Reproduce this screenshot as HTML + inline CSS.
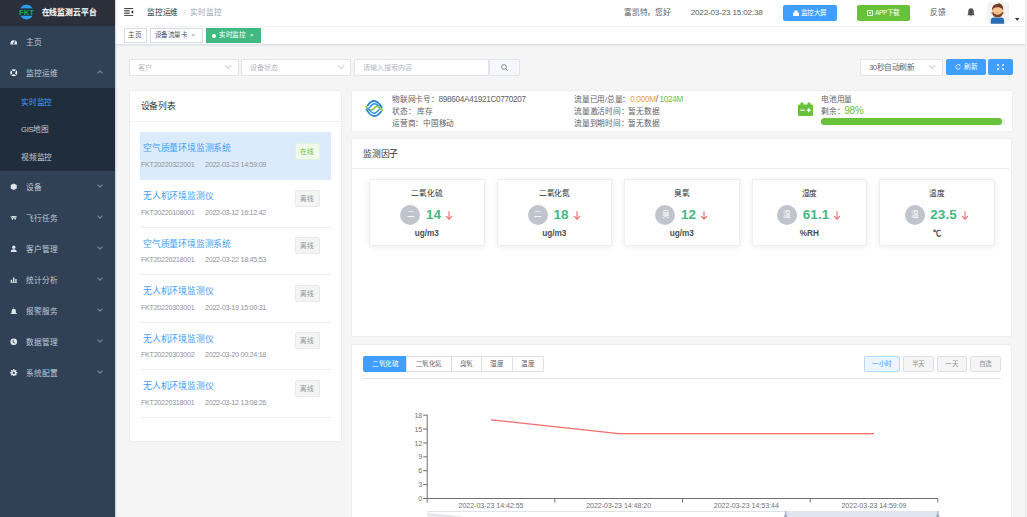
<!DOCTYPE html>
<html lang="zh-CN"><head><meta charset="utf-8">
<style>
*{box-sizing:border-box;margin:0;padding:0}
html,body{width:1027px;height:517px;overflow:hidden}
body{font-family:"Liberation Sans",sans-serif;background:#f5f5f6;position:relative;color:#606266}
.abs{position:absolute}
#side{left:0;top:0;width:115px;height:517px;background:#304156;box-shadow:1px 0 1.5px rgba(0,21,41,.2);z-index:5}
#logo{left:0;top:0;width:115px;height:26px;background:#2b2f3a}
.mi{position:absolute;left:0;width:115px;height:31px;color:#bfcbd9;font-size:7.7px}
.mi .t{position:absolute;left:26px;top:50%;transform:translateY(-45%);line-height:1}
.mi .ic{position:absolute;left:10px;top:50%;width:7.5px;height:7.5px;margin-top:-3.75px}
.mi .ar{position:absolute;left:98px;top:50%;margin-top:-3.5px;width:4px;height:4px;border-right:.6px solid #7d8a9c;border-bottom:.6px solid #7d8a9c;transform:rotate(45deg)}
.sub{position:absolute;left:0;top:88px;width:115px;height:83px;background:#1f2d3d}
.si{position:absolute;left:21px;font-size:7.7px;letter-spacing:-.25px;color:#bfcbd9;line-height:1}
#nav{left:115px;top:0;width:912px;height:26px;background:#fff;box-shadow:0 1px 2px rgba(0,21,41,.08)}
#tags{left:115px;top:26px;width:912px;height:19px;background:#fff;border-bottom:1px solid #dfe2e8;box-shadow:0 1px 1.5px rgba(0,0,0,.05)}
.tag{position:absolute;top:2px;height:14.5px;border:1px solid #d8dce5;background:#fff;color:#495060;font-size:6.6px;letter-spacing:-.4px;line-height:12.5px;padding:0 4px}
.sel{background:#fff;border:1px solid #e1e4ea;border-radius:2px;font-size:7px;line-height:15px;padding-left:8px;color:#b4b8bf}
.sel:after{content:"";position:absolute;right:6.5px;top:3.5px;width:3.6px;height:3.6px;border-right:.6px solid #c6c9cf;border-bottom:.6px solid #c6c9cf;transform:rotate(45deg)}
.inp{background:#fff;border:1px solid #e1e4ea;font-size:7px;line-height:15px;padding-left:8px;color:#b4b8bf}
.dt{font-size:8.8px;letter-spacing:-.2px;line-height:11px;color:#409eff;white-space:nowrap}
.ds{font-size:7.2px;letter-spacing:-.3px;line-height:8px;color:#909399;white-space:nowrap}
.bdg{width:25px;height:17px;border:1px solid;border-radius:2px;font-size:6.6px;letter-spacing:-.4px;line-height:15px;text-align:center}
.it{font-size:7.7px;letter-spacing:-.25px;line-height:9px;color:#606266;white-space:nowrap}
.fbox{background:#fff;border:1px solid #ebeef5;border-radius:2px;box-shadow:0 1px 6px rgba(0,0,0,.08)}
.fname{position:absolute;left:0;width:100%;top:9px;text-align:center;font-size:7.7px;letter-spacing:-.25px;line-height:9px;color:#303133}
.frow{position:absolute;left:0;width:100%;top:24.8px;height:20px;text-align:center;white-space:nowrap;font-size:0}
.fc{display:inline-block;vertical-align:middle;width:20px;height:20px;border-radius:50%;background:#c0c4cc;color:#fff;font-size:7.7px;letter-spacing:-.25px;line-height:20px;text-align:center}
.fv{display:inline-block;vertical-align:middle;margin-left:5.5px;font-size:13.5px;line-height:20px;font-weight:bold;color:#42b983}
.farr{display:inline-block;vertical-align:middle;margin-left:4px}
.funit{position:absolute;left:0;width:100%;top:48.5px;text-align:center;font-size:8.2px;letter-spacing:0;line-height:9px;font-weight:bold;color:#4a4b4f}
.tab{top:356px;height:15.5px;border:1px solid #dcdfe6;background:#fff;color:#606266;font-size:6.6px;letter-spacing:-.4px;line-height:13.5px;text-align:center}
.tbtn{top:356px;height:15.5px;border:1px solid #dcdfe6;border-radius:2px;background:#f5f5f5;color:#909399;font-size:6.6px;letter-spacing:-.4px;line-height:13.5px;text-align:center}
.ax{font-size:8px;fill:#6e7079;font-family:"Liberation Sans",sans-serif}
.card{position:absolute;background:#fff;border:1px solid #eceef3;border-radius:2px}
</style></head><body>
<div id="side" class="abs">
  <div id="logo" class="abs">
    <svg class="abs" style="left:18px;top:3.5px" width="17" height="16" viewBox="0 0 17 16">
      <circle cx="8.5" cy="8" r="7.7" fill="#1c3f70"/>
      <path d="M2.4 4.6 A6.8 6.8 0 0 1 14.6 4.6 Z" fill="#2f9de9"/>
      <path d="M2.4 11.6 A6.8 6.8 0 0 0 14.6 11.6 Z" fill="#2f9de9"/>
      <rect x="0.6" y="4.6" width="15.8" height="7" fill="#22324a"/>
      <text x="8.6" y="10.9" font-size="6.6" font-weight="bold" fill="#14b040" text-anchor="middle" font-family="Liberation Sans" textLength="15" lengthAdjust="spacingAndGlyphs">FKT</text>
    </svg>
    <div class="abs" style="left:41.5px;top:6.5px;font-size:7.8px;letter-spacing:-.05px;font-weight:bold;color:#fff;line-height:12px;white-space:nowrap">在线监测云平台</div>
  </div>
  <div class="mi" style="top:26px"><svg class="ic" viewBox="0 0 10 10"><path d="M0.5 7.5 A4.5 4.5 0 0 1 9.5 7.5 L9.5 8.5 L0.5 8.5 Z" fill="#dfe4ea"/><path d="M5 7.2 L6.8 3.5" stroke="#304156" stroke-width="1.1"/><circle cx="5" cy="7.2" r="1" fill="#304156"/></svg><span class="t">主页</span></div>
  <div class="mi" style="top:57px"><svg class="ic" viewBox="0 0 10 10"><circle cx="5" cy="5" r="4.6" fill="#fff"/><circle cx="5" cy="5" r="2.2" fill="#304156"/><rect x="4.3" y="0" width="1.4" height="10" fill="#304156" transform="rotate(45 5 5)"/><rect x="4.3" y="0" width="1.4" height="10" fill="#304156" transform="rotate(-45 5 5)"/></svg><span class="t">监控运维</span><span class="ar" style="transform:rotate(-135deg);margin-top:-1.5px"></span></div>
  <div class="sub">
    <div class="si" style="top:10.5px;color:#409eff">实时监控</div>
    <div class="si" style="top:38px">GIS地图</div>
    <div class="si" style="top:65.5px">视频监控</div>
  </div>
  <div class="mi" style="top:171px"><svg class="ic" viewBox="0 0 10 10"><path d="M5 0.6 L9 2.8 L9 7.2 L5 9.4 L1 7.2 L1 2.8 Z" fill="#dfe4ea"/></svg><span class="t">设备</span><span class="ar"></span></div>
  <div class="mi" style="top:202px"><svg class="ic" viewBox="0 0 10 10"><path d="M0.5 2.5 L9.5 2.5 L7 8 L5 6 L3 8 Z" fill="#dfe4ea"/><path d="M0.5 2.5 L5 6 L9.5 2.5" stroke="#304156" stroke-width=".8" fill="none"/></svg><span class="t">飞行任务</span><span class="ar"></span></div>
  <div class="mi" style="top:233px"><svg class="ic" viewBox="0 0 10 10"><circle cx="5" cy="3" r="2.2" fill="#dfe4ea"/><path d="M1 9.5 Q1 5.8 5 5.8 Q9 5.8 9 9.5 Z" fill="#dfe4ea"/></svg><span class="t">客户管理</span><span class="ar"></span></div>
  <div class="mi" style="top:264px"><svg class="ic" viewBox="0 0 10 10"><rect x="1" y="5" width="1.8" height="4" fill="#dfe4ea"/><rect x="4" y="2" width="1.8" height="7" fill="#dfe4ea"/><rect x="7" y="4" width="1.8" height="5" fill="#dfe4ea"/><rect x="0.5" y="8.6" width="9" height="0.9" fill="#dfe4ea"/></svg><span class="t">统计分析</span><span class="ar"></span></div>
  <div class="mi" style="top:295px"><svg class="ic" viewBox="0 0 10 10"><path d="M2.2 8 L2.2 5 A2.8 2.8 0 0 1 7.8 5 L7.8 8 Z" fill="#dfe4ea"/><rect x="1" y="8" width="8" height="1.5" fill="#dfe4ea"/><rect x="4.6" y="0.3" width=".8" height="1.3" fill="#dfe4ea"/></svg><span class="t">报警服务</span><span class="ar"></span></div>
  <div class="mi" style="top:326px"><svg class="ic" viewBox="0 0 10 10"><circle cx="5" cy="5" r="4.5" fill="#dfe4ea"/><path d="M4.2 2.5 L4.2 5.5 L6.8 7" stroke="#304156" stroke-width="1.1" fill="none"/></svg><span class="t">数据管理</span><span class="ar"></span></div>
  <div class="mi" style="top:357px"><svg class="ic" viewBox="0 0 10 10"><g fill="#dfe4ea"><circle cx="5" cy="5" r="3.4"/><rect x="4.1" y="0.2" width="1.8" height="9.6"/><rect x="4.1" y="0.2" width="1.8" height="9.6" transform="rotate(45 5 5)"/><rect x="4.1" y="0.2" width="1.8" height="9.6" transform="rotate(90 5 5)"/><rect x="4.1" y="0.2" width="1.8" height="9.6" transform="rotate(135 5 5)"/></g><circle cx="5" cy="5" r="1.5" fill="#304156"/></svg><span class="t">系统配置</span><span class="ar"></span></div>
</div>
<div id="nav" class="abs">
  <svg class="abs" style="left:9px;top:7.5px" width="10" height="9" viewBox="0 0 10 9"><rect x="0.2" y="0" width="9" height="1.1" fill="#444"/><rect x="0.2" y="2.3" width="5.5" height="1.1" fill="#333"/><rect x="0.2" y="4.6" width="5.5" height="1.1" fill="#333"/><rect x="0.2" y="6.9" width="9" height="1.1" fill="#555"/><path d="M9.2 2.2 L7 4 L9.2 5.8Z" fill="#222"/></svg>
  <div class="abs" style="left:32px;top:8px;font-size:7.7px;letter-spacing:-.25px;line-height:9px;white-space:nowrap;color:#303133">监控运维<span style="color:#c0c4cc;margin:0 5px 0 5.5px">/</span><span style="color:#97a8be">实时监控</span></div>
  <div class="abs" style="left:509px;top:8px;font-size:7.7px;letter-spacing:-.25px;line-height:9px;white-space:nowrap;color:#5a5e66">富凯特，您好</div>
  <div class="abs" style="left:575.7px;top:7.6px;font-size:8.1px;letter-spacing:-.17px;line-height:9px;white-space:nowrap;color:#5a5e66">2022-03-23 15:02:38</div>
  <div class="abs btn" style="left:668px;top:5px;width:53.5px;height:16px;background:#409eff;border-radius:2px;color:#fff;font-size:6.6px;letter-spacing:-.4px;line-height:16px;text-align:center"><svg width="6" height="6" viewBox="0 0 6 6" style="vertical-align:-0.5px;margin-right:2px"><rect x="0" y="2.5" width="6" height="3.5" fill="#fff"/><rect x="1.5" y="0.5" width="3" height="2.5" fill="#fff"/></svg>监控大屏</div>
  <div class="abs btn" style="left:742px;top:5px;width:53px;height:16px;background:#67c23a;border-radius:2px;color:#fff;font-size:6.6px;letter-spacing:-.4px;line-height:16px;text-align:center"><svg width="6" height="6" viewBox="0 0 6 6" style="vertical-align:-0.5px;margin-right:2px"><rect x="0.6" y="0.6" width="4.8" height="4.8" fill="none" stroke="#fff" stroke-width=".9"/><rect x="2" y="2" width="2" height="1.5" fill="#fff"/></svg>APP下载</div>
  <div class="abs" style="left:815px;top:8px;font-size:7.7px;letter-spacing:-.25px;line-height:9px;white-space:nowrap;color:#5a5e66">反馈</div>
  <svg class="abs" style="left:852px;top:8.3px" width="8" height="9" viewBox="0 0 8 9"><path d="M4 0.2 Q1.2 0.5 1.2 4 L1.2 6 L0.2 7.2 L7.8 7.2 L6.8 6 L6.8 4 Q6.8 0.5 4 0.2Z" fill="#505050"/><path d="M3 7.6 L5 7.6 L4 8.6Z" fill="#505050"/></svg>
  <div class="abs" style="left:872px;top:2px;width:22px;height:22px;border-radius:4px;background:#f3f3f3;overflow:hidden">
    <svg width="22" height="22" viewBox="0 0 22 22"><path d="M3.8 21.8 L3.8 18.5 Q3.8 15.6 7 15.6 L14 15.6 Q17.1 15.6 17.1 18.5 L17.1 21.8Z" fill="#2b6db3"/><path d="M9.2 14 L11.8 14 L10.5 16.2Z" fill="#f0b77e"/><circle cx="4.8" cy="10.8" r="1.1" fill="#f2bd85"/><circle cx="16.3" cy="10.8" r="1.1" fill="#f2bd85"/><path d="M5.2 7.5 Q5.2 2.3 10.6 2.3 Q16 2.3 16 7.5 L16 11 Q16 15 10.6 15 Q5.2 15 5.2 11Z" fill="#f5c590"/><path d="M5 8.8 Q4.8 2 10.5 2 Q11.8 0.8 12.6 1.6 Q16.4 2.6 16.2 8.8 Q15.2 5 10.6 5.2 Q6 5 5 8.8Z" fill="#6e3b26"/><path d="M5.2 10 Q5.2 15.3 10.6 15.3 Q16 15.3 16 10 L15 10.2 Q14 12.6 10.6 12.6 Q7.2 12.6 6.2 10.2Z" fill="#7a432a"/><path d="M8.6 12.2 Q10.6 11.2 12.6 12.2 Q10.6 13.5 8.6 12.2Z" fill="#e0a56a"/><circle cx="10.6" cy="10.5" r=".6" fill="#e89a8a"/></svg>
  </div>
  <svg class="abs" style="left:900px;top:18px" width="4.4" height="2.8" viewBox="0 0 5 3"><path d="M0 0 L5 0 L2.5 3Z" fill="#333"/></svg>
</div>
<div id="tags" class="abs">
  <div class="tag" style="left:8.5px;width:23px;text-align:center;padding:0">主页</div>
  <div class="tag" style="left:34.5px;width:53px">设备流量卡<span style="position:absolute;left:41px;font-size:6px;color:#999">×</span></div>
  <div class="tag" style="left:91px;width:55px;background:#42b983;border-color:#42b983;color:#fff;padding-left:12px"><span style="position:absolute;left:5px;top:4.5px;width:4px;height:4px;border-radius:50%;background:#fff"></span>实时监控<span style="position:absolute;left:43px;font-size:6px">×</span></div>
</div>

<!-- filters -->
<div class="sel abs" style="left:128.5px;top:58.5px;width:110px;height:17px">客户</div>
<div class="sel abs" style="left:241px;top:58.5px;width:110px;height:17px">设备状态</div>
<div class="abs inp" style="left:354px;top:58.5px;width:135px;height:17px;border-radius:2px 0 0 2px">请输入搜索内容</div>
<div class="abs" style="left:488.5px;top:58.5px;width:31px;height:17px;background:#f5f7fa;border:1px solid #e1e4ea;border-radius:0 2px 2px 0"><svg class="abs" style="left:11px;top:4px" width="7" height="7" viewBox="0 0 7 7"><circle cx="3" cy="3" r="2.4" fill="none" stroke="#777" stroke-width=".8"/><path d="M4.8 4.8 L6.5 6.5" stroke="#777" stroke-width=".8"/></svg></div>
<div class="sel abs" style="left:860px;top:58.5px;width:82.5px;height:17px;color:#606266;font-size:7.7px;letter-spacing:-.5px">30秒自动刷新</div>
<div class="abs" style="left:946px;top:59px;width:40px;height:16px;background:#409eff;border-radius:2px;color:#fff;font-size:6.6px;letter-spacing:-.4px;line-height:16px;text-align:left;padding-left:9px"><svg width="6" height="6" viewBox="0 0 6 6" style="vertical-align:-0.5px;margin-right:3px"><path d="M5 1.6 A2.3 2.3 0 1 0 5.3 3.6" fill="none" stroke="#fff" stroke-width=".8"/><path d="M3.8 0.8 L5.4 0.8 L5.4 2.4Z" fill="#fff"/></svg>刷新</div>
<div class="abs" style="left:988px;top:59px;width:24.5px;height:16px;background:#409eff;border-radius:2px"><svg class="abs" style="left:8.5px;top:5px" width="7" height="6" viewBox="0 0 7 6"><g stroke="#fff" stroke-width=".8"><path d="M0.6 0.6 L2.2 2.2 M6.4 0.6 L4.8 2.2 M0.6 5.4 L2.2 3.8 M6.4 5.4 L4.8 3.8"/></g><g fill="#fff"><path d="M0 0 L2 0 L0 2Z M7 0 L5 0 L7 2Z M0 6 L2 6 L0 4Z M7 6 L5 6 L7 4Z"/></g></svg></div>
<div class="card" style="left:128.5px;top:89.5px;width:213.5px;height:352.5px">
<div class="abs" style="left:11px;top:10px;font-size:8.8px;letter-spacing:-.2px;line-height:11px;color:#303133">设备列表</div>
<div class="abs" style="left:0;top:30px;width:211.5px;height:1px;background:#ebeef5"></div>
</div>
<div class="abs" style="left:140px;top:131.5px;width:191px;height:48px;background:#dcebfb"></div>
<div class="abs dt" style="left:143px;top:143.0px">空气质量环境监测系统</div>
<div class="abs ds" style="left:141px;top:160.5px">FKT20220322001</div>
<div class="abs ds" style="left:205px;top:160.5px">2022-03-23 14:59:09</div>
<div class="abs bdg" style="left:294.5px;top:142.5px;background:#f0f9eb;border-color:#e1f3d8;color:#67c23a">在线</div>
<div class="abs" style="left:140px;top:226.5px;width:191px;height:1.2px;background:#ebeef5"></div>
<div class="abs dt" style="left:143px;top:191.0px">无人机环境监测仪</div>
<div class="abs ds" style="left:141px;top:208.5px">FKT20220108001</div>
<div class="abs ds" style="left:205px;top:208.5px">2022-03-12 16:12:42</div>
<div class="abs bdg" style="left:294.5px;top:189.5px;background:#f4f4f5;border-color:#e9e9eb;color:#909399">离线</div>
<div class="abs" style="left:140px;top:274px;width:191px;height:1.2px;background:#ebeef5"></div>
<div class="abs dt" style="left:143px;top:238.5px">空气质量环境监测系统</div>
<div class="abs ds" style="left:141px;top:256px">FKT20220218001</div>
<div class="abs ds" style="left:205px;top:256px">2022-03-22 18:45:53</div>
<div class="abs bdg" style="left:294.5px;top:237px;background:#f4f4f5;border-color:#e9e9eb;color:#909399">离线</div>
<div class="abs" style="left:140px;top:321.6px;width:191px;height:1.2px;background:#ebeef5"></div>
<div class="abs dt" style="left:143px;top:286.1px">无人机环境监测仪</div>
<div class="abs ds" style="left:141px;top:303.6px">FKT20220303001</div>
<div class="abs ds" style="left:205px;top:303.6px">2022-03-19 15:00:31</div>
<div class="abs bdg" style="left:294.5px;top:284.6px;background:#f4f4f5;border-color:#e9e9eb;color:#909399">离线</div>
<div class="abs" style="left:140px;top:369px;width:191px;height:1.2px;background:#ebeef5"></div>
<div class="abs dt" style="left:143px;top:333.5px">无人机环境监测仪</div>
<div class="abs ds" style="left:141px;top:351px">FKT20220303002</div>
<div class="abs ds" style="left:205px;top:351px">2022-03-20 00:24:18</div>
<div class="abs bdg" style="left:294.5px;top:332px;background:#f4f4f5;border-color:#e9e9eb;color:#909399">离线</div>
<div class="abs" style="left:140px;top:416.5px;width:191px;height:1.2px;background:#ebeef5"></div>
<div class="abs dt" style="left:143px;top:381.0px">无人机环境监测仪</div>
<div class="abs ds" style="left:141px;top:398.5px">FKT20220318001</div>
<div class="abs ds" style="left:205px;top:398.5px">2022-03-12 13:08:26</div>
<div class="abs bdg" style="left:294.5px;top:379.5px;background:#f4f4f5;border-color:#e9e9eb;color:#909399">离线</div>
<div class="card" style="left:351px;top:89.5px;width:661.5px;height:42px">
  <svg class="abs" style="left:13px;top:8.5px" width="19" height="19" viewBox="0 0 19 19">
    <g fill="none" stroke-linecap="round">
    <path d="M2.6 6.4 Q6 1.8 9.1 1.8 Q12.6 1.8 16.8 8.2" stroke="#1f7fd2" stroke-width="1.7"/>
    <path d="M4.6 8.6 Q7.4 4.8 9.6 4.8 Q12.2 4.8 15.4 9.8" stroke="#2a8ee0" stroke-width="1.4"/>
    <path d="M1 7.4 Q3.5 11.4 6 11.2 Q8.2 11 10.6 7.8 Q12.8 5.8 17.6 11.4" stroke="#8cc43c" stroke-width="1.6"/>
    <path d="M3.2 9.4 Q6.6 14.2 9 14.2 Q11.2 14.2 14 10.6" stroke="#2a8ee0" stroke-width="1.4"/>
    <path d="M1.6 10.6 Q5.6 17.2 9.4 17.2 Q12.6 17.2 16.2 12.6" stroke="#1f7fd2" stroke-width="1.7"/>
    </g>
  </svg>
  <div class="abs it" style="left:40px;top:4.5px">物联网卡号：<span style="font-size:8.2px;letter-spacing:-.3px">898604A41921C0770207</span></div>
  <div class="abs it" style="left:40px;top:16.5px">状态：<span style="margin-left:2px">库存</span></div>
  <div class="abs it" style="left:40px;top:28.5px">运营商：中国移动</div>
  <div class="abs it" style="left:222px;top:4.5px">流量已用/总量：<span style="font-size:8.2px;letter-spacing:-.3px"><span style="color:#e6a23c">0.000M</span>/ <span style="color:#67c23a">1024M</span></span></div>
  <div class="abs it" style="left:222px;top:16.5px">流量激活时间：暂无数据</div>
  <div class="abs it" style="left:222px;top:28.5px">流量到期时间：暂无数据</div>
  <svg class="abs" style="left:446px;top:11px" width="15" height="14" viewBox="0 0 15 14"><rect x="0" y="2.5" width="15" height="11.5" rx="1.2" fill="#67c23a"/><rect x="2.5" y="0.5" width="3" height="2.5" fill="#67c23a"/><rect x="9.5" y="0.5" width="3" height="2.5" fill="#67c23a"/><rect x="2.5" y="7.6" width="4" height="1.3" fill="#fff"/><rect x="8.8" y="7.6" width="4" height="1.3" fill="#fff"/><rect x="10.15" y="6.2" width="1.3" height="4" fill="#fff"/></svg>
  <div class="abs it" style="left:469px;top:4px">电池用量</div>
  <div class="abs it" style="left:469px;top:15px">剩余：<span style="color:#67c23a;font-size:10px;letter-spacing:-.3px;vertical-align:-.5px">98%</span></div>
  <div class="abs" style="left:469px;top:27px;width:184px;height:7px;border-radius:4px;background:#ebeef5"><div style="width:180.5px;height:7px;border-radius:4px;background:#67c23a"></div></div>
</div>
<div class="card" style="left:351px;top:138.3px;width:660.5px;height:198.4px">
<div class="abs" style="left:11px;top:9.5px;font-size:8.8px;letter-spacing:-.2px;line-height:11px;color:#303133">监测因子</div>
<div class="abs" style="left:0;top:29px;width:658px;height:1px;background:#ebeef5"></div>
</div>
<div class="abs fbox" style="left:369.0px;top:179.3px;width:115.5px;height:67px">
<div class="fname">二氧化硫</div>
<div class="frow"><span class="fc">二</span><span class="fv">14</span><svg class="farr" width="8" height="9" viewBox="0 0 8 9"><path d="M4 0.3 L4 8.2 M1 5.2 L4 8.2 L7 5.2" stroke="#f56c6c" stroke-width="1.1" fill="none"/></svg></div>
<div class="funit">ug/m3</div>
</div>
<div class="abs fbox" style="left:496.5px;top:179.3px;width:115.5px;height:67px">
<div class="fname">二氧化氮</div>
<div class="frow"><span class="fc">二</span><span class="fv">18</span><svg class="farr" width="8" height="9" viewBox="0 0 8 9"><path d="M4 0.3 L4 8.2 M1 5.2 L4 8.2 L7 5.2" stroke="#f56c6c" stroke-width="1.1" fill="none"/></svg></div>
<div class="funit">ug/m3</div>
</div>
<div class="abs fbox" style="left:624.0px;top:179.3px;width:115.5px;height:67px">
<div class="fname">臭氧</div>
<div class="frow"><span class="fc">臭</span><span class="fv">12</span><svg class="farr" width="8" height="9" viewBox="0 0 8 9"><path d="M4 0.3 L4 8.2 M1 5.2 L4 8.2 L7 5.2" stroke="#f56c6c" stroke-width="1.1" fill="none"/></svg></div>
<div class="funit">ug/m3</div>
</div>
<div class="abs fbox" style="left:751.5px;top:179.3px;width:115.5px;height:67px">
<div class="fname">湿度</div>
<div class="frow"><span class="fc">湿</span><span class="fv">61.1</span><svg class="farr" width="8" height="9" viewBox="0 0 8 9"><path d="M4 0.3 L4 8.2 M1 5.2 L4 8.2 L7 5.2" stroke="#f56c6c" stroke-width="1.1" fill="none"/></svg></div>
<div class="funit">%RH</div>
</div>
<div class="abs fbox" style="left:879.0px;top:179.3px;width:115.5px;height:67px">
<div class="fname">温度</div>
<div class="frow"><span class="fc">温</span><span class="fv">23.5</span><svg class="farr" width="8" height="9" viewBox="0 0 8 9"><path d="M4 0.3 L4 8.2 M1 5.2 L4 8.2 L7 5.2" stroke="#f56c6c" stroke-width="1.1" fill="none"/></svg></div>
<div class="funit">℃</div>
</div>
<div class="card" style="left:351px;top:344px;width:660.5px;height:200px"></div>
<div class="abs tab" style="left:363.3px;top:356px;width:43.69999999999999px;background:#409eff;border-color:#409eff;color:#fff;border-radius:2px 0 0 2px">二氧化硫</div>
<div class="abs tab" style="left:406px;top:356px;width:45.69999999999999px;">二氧化氮</div>
<div class="abs tab" style="left:450.7px;top:356px;width:31.30000000000001px;">臭氧</div>
<div class="abs tab" style="left:481px;top:356px;width:32px;">湿度</div>
<div class="abs tab" style="left:512px;top:356px;width:32px;border-radius:0 2px 2px 0;">温度</div>
<div class="abs tbtn" style="left:863.5px;width:36.89999999999998px;background:#ecf5ff;border-color:#b3d8ff;color:#409eff">一小时</div>
<div class="abs tbtn" style="left:902.7px;width:31.299999999999955px">半天</div>
<div class="abs tbtn" style="left:936.7px;width:30.799999999999955px">一天</div>
<div class="abs tbtn" style="left:970.2px;width:30.5px">自选</div>
<div class="abs" style="left:363px;top:378px;width:638px;height:1px;background:#e4e7ed"></div>
<svg class="abs" style="left:352px;top:380px" width="660" height="137" viewBox="352 380 660 137"><path d="M427.2 414.7 L427.2 498.5" stroke="#6e7079" stroke-width="1"/><path d="M427.2 498.5 L937.8 498.5" stroke="#6e7079" stroke-width="1"/><path d="M423.2 498.50 L427.2 498.50" stroke="#6e7079" stroke-width="1"/><text x="422.2" y="501.10" class="ax" text-anchor="end" textLength="4" lengthAdjust="spacingAndGlyphs">0</text><path d="M423.2 484.62 L427.2 484.62" stroke="#6e7079" stroke-width="1"/><text x="422.2" y="487.22" class="ax" text-anchor="end" textLength="4" lengthAdjust="spacingAndGlyphs">3</text><path d="M423.2 470.73 L427.2 470.73" stroke="#6e7079" stroke-width="1"/><text x="422.2" y="473.33" class="ax" text-anchor="end" textLength="4" lengthAdjust="spacingAndGlyphs">6</text><path d="M423.2 456.85 L427.2 456.85" stroke="#6e7079" stroke-width="1"/><text x="422.2" y="459.45" class="ax" text-anchor="end" textLength="4" lengthAdjust="spacingAndGlyphs">9</text><path d="M423.2 442.97 L427.2 442.97" stroke="#6e7079" stroke-width="1"/><text x="422.2" y="445.57" class="ax" text-anchor="end" textLength="7.8" lengthAdjust="spacingAndGlyphs">12</text><path d="M423.2 429.08 L427.2 429.08" stroke="#6e7079" stroke-width="1"/><text x="422.2" y="431.68" class="ax" text-anchor="end" textLength="7.8" lengthAdjust="spacingAndGlyphs">15</text><path d="M423.2 415.20 L427.2 415.20" stroke="#6e7079" stroke-width="1"/><text x="422.2" y="417.80" class="ax" text-anchor="end" textLength="7.8" lengthAdjust="spacingAndGlyphs">18</text><path d="M427.20 498.5 L427.20 502.5" stroke="#6e7079" stroke-width="1"/><path d="M554.85 498.5 L554.85 502.5" stroke="#6e7079" stroke-width="1"/><path d="M682.50 498.5 L682.50 502.5" stroke="#6e7079" stroke-width="1"/><path d="M810.15 498.5 L810.15 502.5" stroke="#6e7079" stroke-width="1"/><path d="M937.80 498.5 L937.80 502.5" stroke="#6e7079" stroke-width="1"/><text x="491.02" y="507.5" class="ax" text-anchor="middle" textLength="65" lengthAdjust="spacingAndGlyphs">2022-03-23 14:42:55</text><text x="618.67" y="507.5" class="ax" text-anchor="middle" textLength="65" lengthAdjust="spacingAndGlyphs">2022-03-23 14:48:20</text><text x="746.33" y="507.5" class="ax" text-anchor="middle" textLength="65" lengthAdjust="spacingAndGlyphs">2022-03-23 14:53:44</text><text x="873.97" y="507.5" class="ax" text-anchor="middle" textLength="65" lengthAdjust="spacingAndGlyphs">2022-03-23 14:59:09</text><path d="M491.02 419.83 L618.67 433.71 L746.33 433.71 L873.97 433.71" stroke="#f56c6c" stroke-width="1.2" fill="none"/><rect x="428" y="511.5" width="510" height="20" fill="none" stroke="#e0e3e8" stroke-width="1"/><path d="M428.5 513.6 L462 517 L428.5 517Z" fill="#ebebed"/><path d="M428.5 513.6 L462 517" stroke="#dcdde0" stroke-width=".8" fill="none"/><rect x="785.6" y="511.5" width="152.19999999999993" height="20" fill="#dfe5ee"/><path d="M785.6 511 L785.6 517 M937.8 511 L937.8 517" stroke="#94a3bf" stroke-width="1"/><rect x="784" y="514.5" width="3.2" height="3" rx="1" fill="#a3b2c9"/><rect x="936.2" y="514.5" width="3.2" height="3" rx="1" fill="#a3b2c9"/></svg>
<div class="abs" style="left:1025px;top:0;width:2px;height:517px;background:#f6f6f6;border-left:1px solid #e9e9ea;z-index:9"></div>
<div class="abs" style="left:115px;top:26px;width:910px;height:1px;background:#f1f2f4;z-index:6"></div>
</body></html>
